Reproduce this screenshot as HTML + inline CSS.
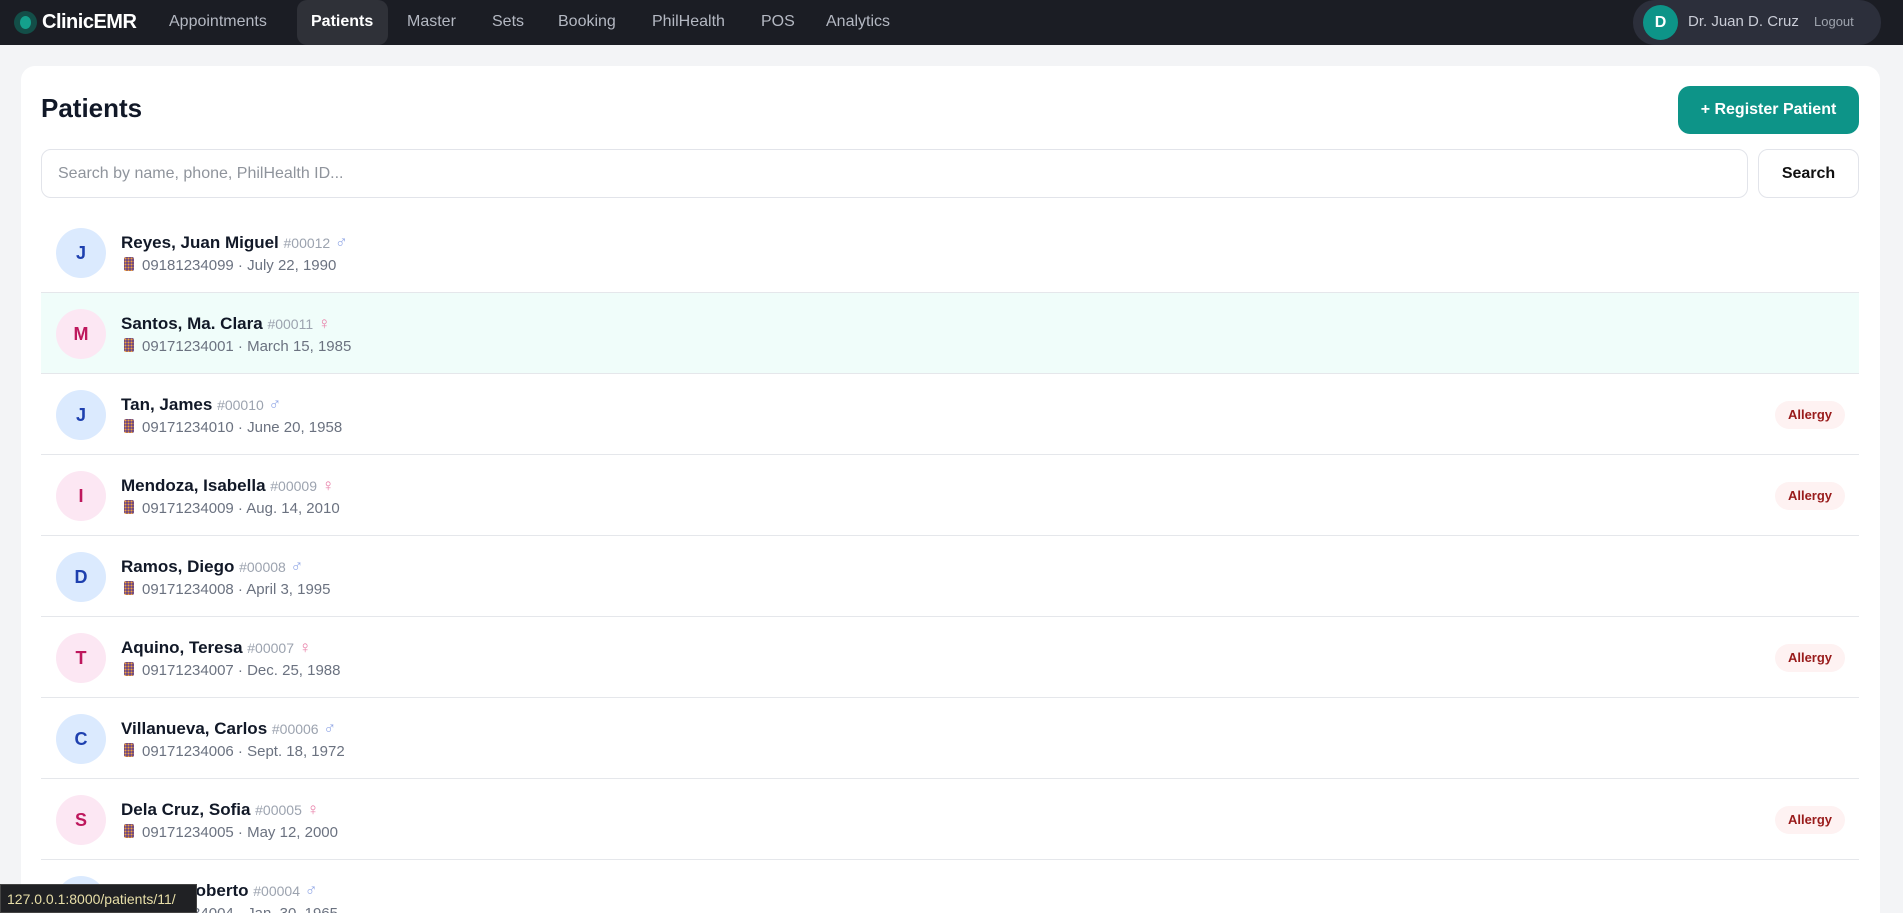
<!DOCTYPE html>
<html style="overflow:hidden;height:913px"><head><meta charset="utf-8"><style>
*{box-sizing:border-box;margin:0;padding:0}
html,body{width:1903px;height:913px;overflow:hidden}
body{background:#f3f4f6;font-family:"Liberation Sans",sans-serif;position:relative}
.nav{position:absolute;left:0;top:0;width:1903px;height:45px;background:#1b1d24}
.logo{position:absolute;left:14px;top:11px;width:23px;height:23px;border-radius:50%;background:#134e48}
.logo:after{content:"";position:absolute;left:6px;top:5px;width:11px;height:13px;border-radius:50%;background:#14a08c}
.brand{position:absolute;left:42px;top:11px;color:#fff;font-weight:bold;font-size:20px;letter-spacing:-0.5px}
.ni{position:absolute;top:13px;color:#b4b8c2;font-size:16px}
.act{position:absolute;left:297px;top:0;width:91px;height:45px;background:#2f3138;border-radius:10px}
.user{position:absolute;left:1633px;top:0;width:248px;height:45px;background:#2c2f3b;border-radius:22px}
.uav{position:absolute;left:1643px;top:5px;width:35px;height:35px;border-radius:50%;background:#0d9488;color:#fff;font-weight:bold;font-size:16px;text-align:center;line-height:35px}
.card{position:absolute;left:21px;top:66px;width:1859px;height:847px;background:#fff;border-radius:14px 14px 0 0}
h1{position:absolute;left:41px;top:93px;font-size:26px;font-weight:bold;color:#111827}
.reg{position:absolute;left:1678px;top:86px;width:181px;height:48px;background:#0d9488;border-radius:12px;color:#fff;font-weight:bold;font-size:16px;text-align:center;line-height:48px}
.inp{position:absolute;left:41px;top:149px;width:1707px;height:49px;border:1px solid #e2e4ea;border-radius:10px;color:#8f949c;font-size:16px;padding-left:16px;line-height:47px}
.sb{position:absolute;left:1758px;top:149px;width:101px;height:49px;border:1px solid #e2e4ea;border-radius:10px;color:#111;font-weight:bold;font-size:16px;text-align:center;line-height:47px}
.row{position:absolute;left:41px;width:1818px;height:81px;border-bottom:1px solid #e5e7eb}
.av{position:absolute;left:15px;top:16px;width:50px;height:50px;border-radius:50%;text-align:center;line-height:50px;font-weight:bold;font-size:18px}
.m{background:#dbeafe;color:#1e40af}.f{background:#fce7f3;color:#be185d}
.nm{position:absolute;left:80px;top:21px;font-size:17px;font-weight:bold;color:#111827;white-space:nowrap}
.nm span{font-weight:normal;font-size:14px;color:#9ca3af}
.nm i{font-style:normal;font-weight:normal;font-size:17px}
.mt{position:absolute;left:80px;top:45px;font-size:15px;color:#6b7280;white-space:nowrap}
.ph{display:inline-block;width:10px;height:14px;background:#5b3a8c;border-radius:2px;margin:0 8px 0 3px;vertical-align:-1px;background-image:radial-gradient(#f3a13b 1px,transparent 1.2px);background-size:3px 3px}
.al{position:absolute;right:14px;top:27px;width:70px;height:28px;border-radius:14px;background:#fef2f2;color:#991b1b;font-weight:bold;font-size:13px;text-align:center;line-height:28px}
.st{position:absolute;left:0;top:884px;width:197px;height:29px;background:#202124;color:#e8dfa8;font-size:14px;line-height:29px;padding-left:6px;border:1px solid #444}
</style></head><body>
<div class="nav">
<div class="logo"></div><div class="brand">ClinicEMR</div>
<div class="act"></div>
<div class="ni" style="left:169px">Appointments</div>
<div class="ni" style="left:311px;color:#fff;font-weight:bold">Patients</div>
<div class="ni" style="left:407px">Master</div>
<div class="ni" style="left:492px">Sets</div>
<div class="ni" style="left:558px">Booking</div>
<div class="ni" style="left:652px">PhilHealth</div>
<div class="ni" style="left:761px">POS</div>
<div class="ni" style="left:826px;width:64px;overflow:hidden;white-space:nowrap">Analytics</div>
<div class="user"></div><div class="uav">D</div>
<div class="ni" style="left:1688px;top:13px;font-size:15px;color:#c9ccd6">Dr. Juan D. Cruz</div>
<div class="ni" style="left:1814px;top:14px;font-size:13px;color:#9ea3ad">Logout</div>
</div>
<div class="card"></div>
<h1>Patients</h1>
<div class="reg">+ Register Patient</div>
<div class="inp">Search by name, phone, PhilHealth ID...</div>
<div class="sb">Search</div>

<div class="row" style="top:212px"><div class="av m">J</div><div class="nm">Reyes, Juan Miguel <span>#00012</span> <i style="color:#93a8e6">♂</i></div><div class="mt"><b class="ph"></b>09181234099 · July 22, 1990</div></div>
<div class="row" style="top:293px;background:#f0fdfa"><div class="av f">M</div><div class="nm">Santos, Ma. Clara <span>#00011</span> <i style="color:#e87fa8">♀</i></div><div class="mt"><b class="ph"></b>09171234001 · March 15, 1985</div></div>
<div class="row" style="top:374px"><div class="av m">J</div><div class="nm">Tan, James <span>#00010</span> <i style="color:#93a8e6">♂</i></div><div class="mt"><b class="ph"></b>09171234010 · June 20, 1958</div><div class="al">Allergy</div></div>
<div class="row" style="top:455px"><div class="av f">I</div><div class="nm">Mendoza, Isabella <span>#00009</span> <i style="color:#e87fa8">♀</i></div><div class="mt"><b class="ph"></b>09171234009 · Aug. 14, 2010</div><div class="al">Allergy</div></div>
<div class="row" style="top:536px"><div class="av m">D</div><div class="nm">Ramos, Diego <span>#00008</span> <i style="color:#93a8e6">♂</i></div><div class="mt"><b class="ph"></b>09171234008 · April 3, 1995</div></div>
<div class="row" style="top:617px"><div class="av f">T</div><div class="nm">Aquino, Teresa <span>#00007</span> <i style="color:#e87fa8">♀</i></div><div class="mt"><b class="ph"></b>09171234007 · Dec. 25, 1988</div><div class="al">Allergy</div></div>
<div class="row" style="top:698px"><div class="av m">C</div><div class="nm">Villanueva, Carlos <span>#00006</span> <i style="color:#93a8e6">♂</i></div><div class="mt"><b class="ph"></b>09171234006 · Sept. 18, 1972</div></div>
<div class="row" style="top:779px"><div class="av f">S</div><div class="nm">Dela Cruz, Sofia <span>#00005</span> <i style="color:#e87fa8">♀</i></div><div class="mt"><b class="ph"></b>09171234005 · May 12, 2000</div><div class="al">Allergy</div></div>
<div class="row" style="top:860px;border-bottom:none"><div class="av m">R</div><div class="nm">Garcia, Roberto <span>#00004</span> <i style="color:#93a8e6">♂</i></div><div class="mt"><b class="ph"></b>09171234004 · Jan. 30, 1965</div></div>
<div class="st">127.0.0.1:8000/patients/11/</div>
</body></html>
